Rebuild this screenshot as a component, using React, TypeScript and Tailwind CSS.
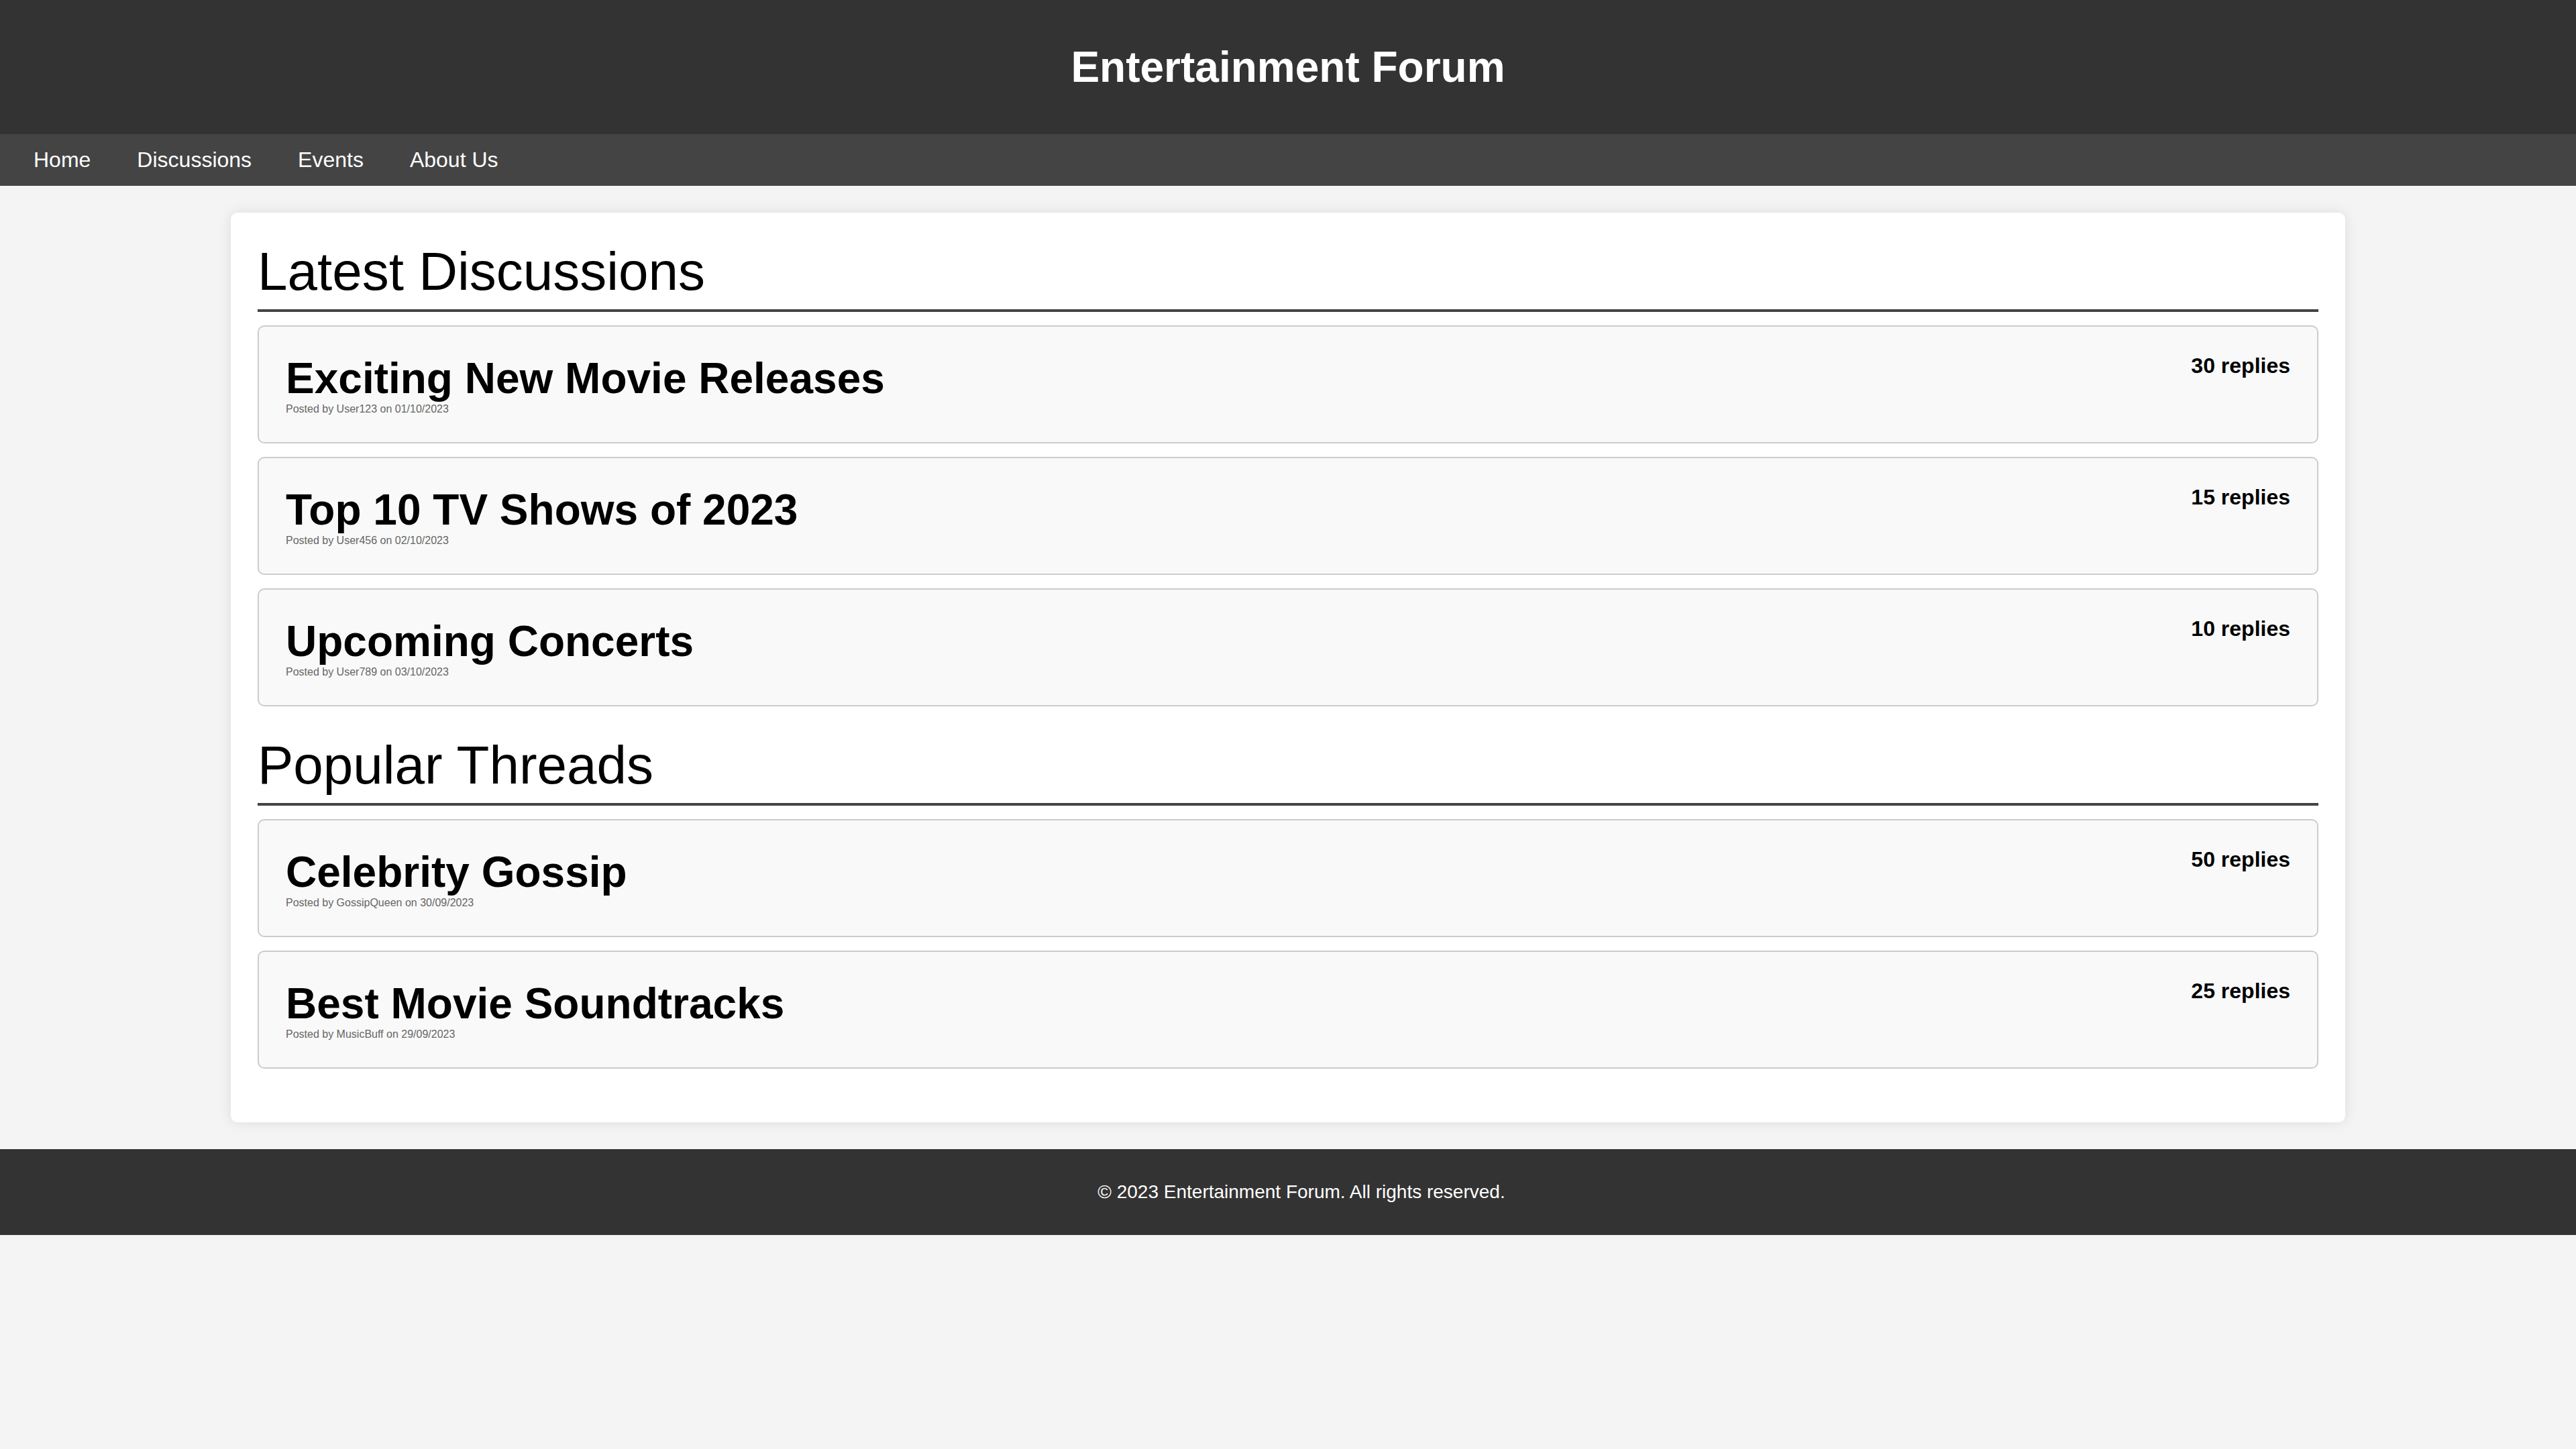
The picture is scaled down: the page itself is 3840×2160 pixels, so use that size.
import React from 'react';

type Thread = {
  title: string;
  author: string;
  date: string;
  replies: number;
};

const latest: Thread[] = [
  { title: 'Exciting New Movie Releases', author: 'User123', date: '01/10/2023', replies: 30 },
  { title: 'Top 10 TV Shows of 2023', author: 'User456', date: '02/10/2023', replies: 15 },
  { title: 'Upcoming Concerts', author: 'User789', date: '03/10/2023', replies: 10 },
];

const popular: Thread[] = [
  { title: 'Celebrity Gossip', author: 'GossipQueen', date: '30/09/2023', replies: 50 },
  { title: 'Best Movie Soundtracks', author: 'MusicBuff', date: '29/09/2023', replies: 25 },
];

const navLinks = ['Home', 'Discussions', 'Events', 'About Us'];

function ThreadCard({ thread }: { thread: Thread }) {
  return (
    <div className="flex justify-between items-start mb-[20px] p-[40px] bg-[#f9f9f9] border-2 border-[#ccc] rounded-[10px]">
      <div>
        <h3 className="m-0 text-[64px] font-bold leading-[normal]">{thread.title}</h3>
        <p className="m-0 text-[16px] text-[#666] leading-[normal]">
          Posted by {thread.author} on {thread.date}
        </p>
      </div>
      <span className="text-[32px] font-bold leading-[normal]">{thread.replies} replies</span>
    </div>
  );
}

function Section({ title, threads }: { title: string; threads: Thread[] }) {
  return (
    <section className="flex flex-col mb-[20px]">
      <h2 className="m-0 mb-[20px] pt-[2px] pb-[10px] text-[80px] font-normal leading-[normal] border-b-4 border-[#444]">
        {title}
      </h2>
      {threads.map((t) => (
        <ThreadCard key={t.title} thread={t} />
      ))}
    </section>
  );
}

export default function App() {
  return (
    <div className="min-h-screen bg-[#f4f4f4] text-black font-['Liberation_Sans',Arial,sans-serif]">
      <header className="bg-[#333] text-white text-center py-[20px]">
        <h1 className="my-[43px] text-[64px] font-bold leading-[normal]">Entertainment Forum</h1>
      </header>

      <nav className="bg-[#444] p-[20px] flex gap-[9px]">
        {navLinks.map((link) => (
          <a key={link} href="#" className="px-[30px] text-[32px] text-white leading-[normal]">
            {link}
          </a>
        ))}
      </nav>

      <main className="w-[3152px] mx-auto mt-[40px] mb-[40px] p-[40px] bg-white rounded-[10px] shadow-[0_0_20px_rgba(0,0,0,0.1)]">
        <Section title="Latest Discussions" threads={latest} />
        <Section title="Popular Threads" threads={popular} />
      </main>

      <footer className="bg-[#333] text-white text-center py-[20px] pl-[40px]">
        <p className="my-[28px] text-[28px] leading-[normal]">© 2023 Entertainment Forum. All rights reserved.</p>
      </footer>
    </div>
  );
}
